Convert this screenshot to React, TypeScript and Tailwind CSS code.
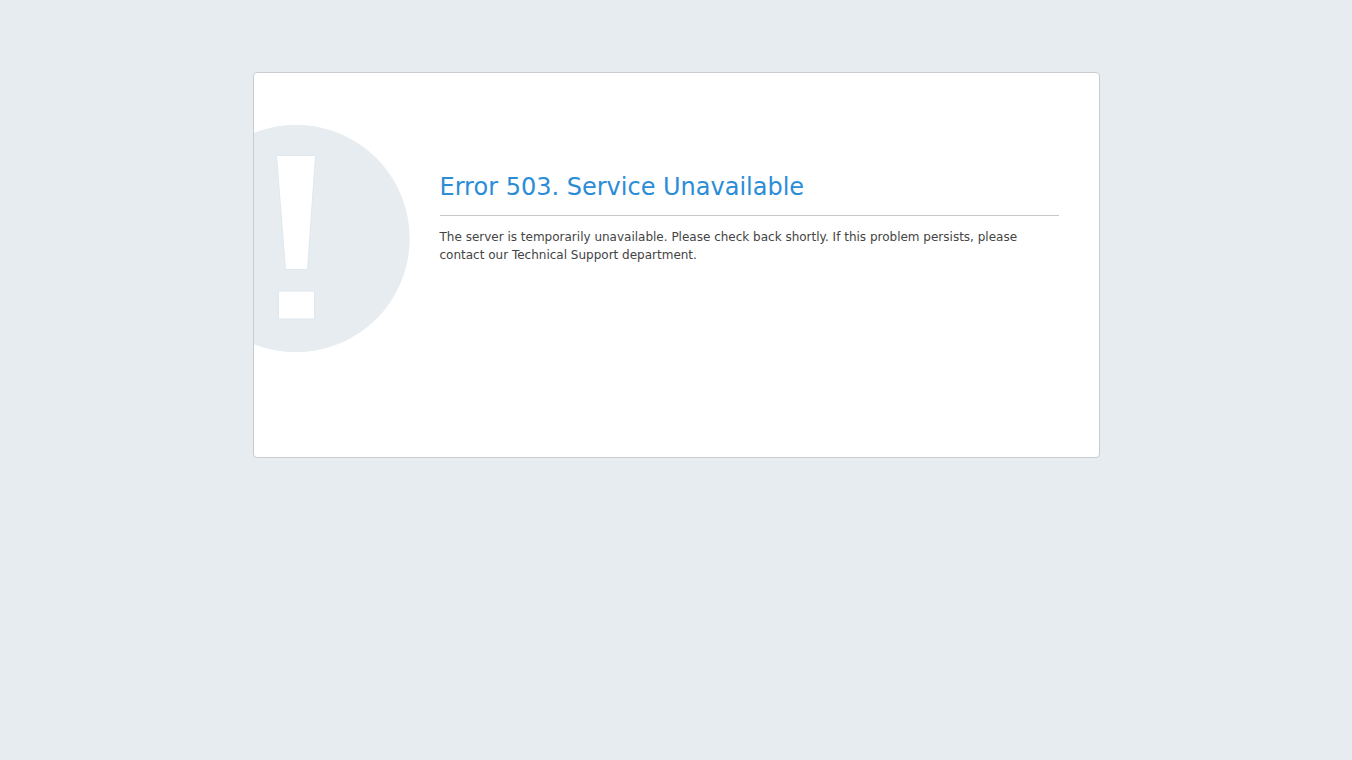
export default function App() {
  return (
    <div className="min-h-[760px] bg-[#e6ecf0] pt-[72px] font-['DejaVu_Sans',sans-serif]">
      <div className="mx-auto flex h-[386px] w-[847px] overflow-hidden rounded-[4px] border border-[#c8ccd0] bg-white pt-[52px]">
        <svg className="ml-[-72px] h-[228px] w-[228px] shrink-0" viewBox="0 0 228 228">
          <circle cx="114" cy="113.5" r="113.7" fill="#e6ecf0" />
          <path d="M94.5 30.5H133.5L125.5 144.5H103.5Z" fill="#fff" stroke="#dfe8ef" />
          <rect x="96.5" y="166" width="36" height="28" fill="#fff" stroke="#dfe8ef" />
        </svg>
        <div className="ml-[30px] w-[619px]">
          <h1 className="mt-[47px] border-b border-[#c8c8c8] pb-[13px] text-[24px] leading-[30px] text-[#2b8dd6]">
            Error 503. Service Unavailable
          </h1>
          <p className="mt-[12px] text-[12px] leading-[18px] text-[#444444]">
            The server is temporarily unavailable. Please check back shortly. If this problem persists, please contact our Technical Support department.
          </p>
        </div>
      </div>
    </div>
  );
}
